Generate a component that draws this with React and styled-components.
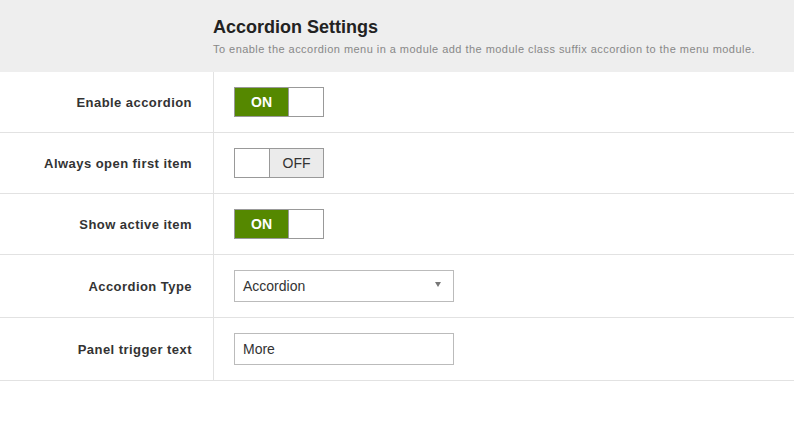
import React from "react";
import styled, { createGlobalStyle } from "styled-components";

const Global = createGlobalStyle`
  html, body { margin: 0; padding: 0; background: #ffffff; }
  body { font-family: "Liberation Sans", Arial, Helvetica, sans-serif; color: #333; }
`;

const Page = styled.div`
  width: 794px;
  display: flex;
  flex-direction: column;
`;

const Header = styled.div`
  background: #eeeeee;
  height: 72px;
  box-sizing: border-box;
  padding: 16px 0 0 213px;
`;

const Title = styled.h2`
  margin: 0;
  font-size: 18px;
  line-height: 22px;
  font-weight: bold;
  color: #222;
`;

const Subtitle = styled.p`
  margin: 4px 0 0;
  font-size: 11px;
  line-height: 14px;
  letter-spacing: 0.46px;
  color: #888;
`;

const Row = styled.div`
  display: grid;
  grid-template-columns: 214px 1fr;
  border-bottom: 1px solid #e2e2e2;
`;

const Label = styled.div`
  display: flex;
  align-items: center;
  justify-content: flex-end;
  padding-right: 21px;
  font-size: 13px;
  letter-spacing: 0.45px;
  font-weight: bold;
  color: #333;
  border-right: 1px solid #e2e2e2;
`;

const Control = styled.div`
  display: flex;
  align-items: center;
  padding: 15px 0 15px 20px;
`;

const Switch = styled.div`
  display: flex;
  flex-direction: ${(p) => (p.$on ? "row" : "row-reverse")};
  width: 90px;
  height: 30px;
  box-sizing: border-box;
  border: 1px solid #999;
`;

const SwitchState = styled.div`
  width: 53px;
  display: flex;
  align-items: center;
  justify-content: center;
  font-size: 14px;
  background: ${(p) => (p.$on ? "#558800" : "#ebebeb")};
  color: ${(p) => (p.$on ? "#fff" : "#333")};
  font-weight: ${(p) => (p.$on ? "bold" : "normal")};
  border-left: ${(p) => (p.$on ? "none" : "1px solid #999")};
  border-right: ${(p) => (p.$on ? "1px solid #999" : "none")};
`;

const Knob = styled.div`
  flex: 1;
  background: #fff;
`;

const Field = styled.div`
  position: relative;
  width: 220px;
  height: 32px;
  box-sizing: border-box;
  border: 1px solid #bbb;
  display: flex;
  align-items: center;
  padding-left: 8px;
  font-size: 14px;
  color: #333;
  background: #fff;
`;

const Arrow = styled.span`
  position: absolute;
  right: 12px;
  top: 11px;
  width: 0;
  height: 0;
  border-left: 3.5px solid transparent;
  border-right: 3.5px solid transparent;
  border-top: 5px solid #777;
`;

const Toggle = ({ on }) => (
  <Switch $on={on}>
    <SwitchState $on={on}>{on ? "ON" : "OFF"}</SwitchState>
    <Knob />
  </Switch>
);

export default function App() {
  return (
    <Page>
      <Global />
      <Header>
        <Title>Accordion Settings</Title>
        <Subtitle>
          To enable the accordion menu in a module add the module class suffix accordion to the menu module.
        </Subtitle>
      </Header>
      <Row>
        <Label>Enable accordion</Label>
        <Control><Toggle on /></Control>
      </Row>
      <Row>
        <Label>Always open first item</Label>
        <Control><Toggle on={false} /></Control>
      </Row>
      <Row>
        <Label>Show active item</Label>
        <Control><Toggle on /></Control>
      </Row>
      <Row>
        <Label>Accordion Type</Label>
        <Control>
          <Field>
            Accordion
            <Arrow />
          </Field>
        </Control>
      </Row>
      <Row>
        <Label>Panel trigger text</Label>
        <Control>
          <Field>More</Field>
        </Control>
      </Row>
    </Page>
  );
}
